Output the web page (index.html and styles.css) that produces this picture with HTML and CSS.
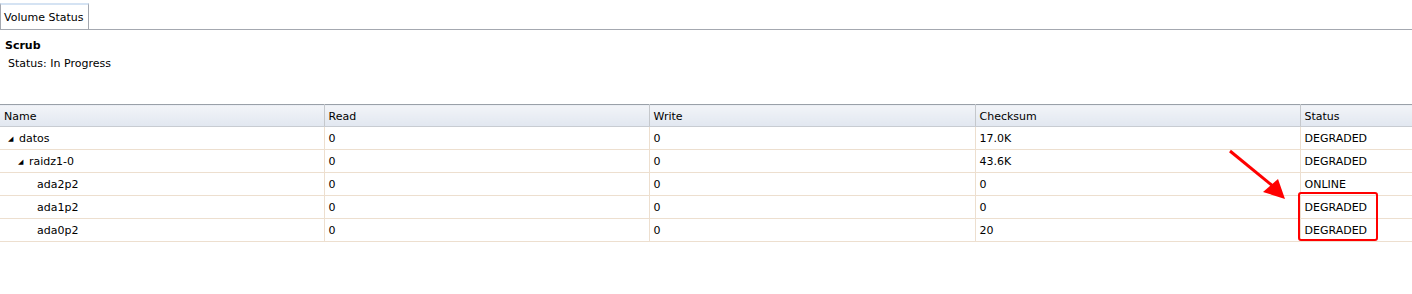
FILE: index.html
```html
<!DOCTYPE html>
<html lang="en">
<head>
  <meta charset="UTF-8" />
  <title>Volume Status</title>
  <link rel="stylesheet" href="styles.css">
</head>
<body>

  <div class="tabbar">
    <span class="tab">Volume Status</span>
  </div>

  <div class="scrub">
    <div class="scrub-title">Scrub</div>
    <div class="scrub-status">Status: In Progress</div>
  </div>

  <div class="grid-wrap">
    <table class="grid">
      <colgroup>
        <col style="width: 324px">
        <col style="width: 325px">
        <col style="width: 326px">
        <col style="width: 325px">
        <col>
      </colgroup>
      <thead>
        <tr>
          <th>Name</th>
          <th>Read</th>
          <th>Write</th>
          <th>Checksum</th>
          <th>Status</th>
        </tr>
      </thead>
      <tbody>
        <tr>
          <td class="lvl0"><span class="tri">&#9698;</span>datos</td>
          <td>0</td><td>0</td><td>17.0K</td><td>DEGRADED</td>
        </tr>
        <tr>
          <td class="lvl1"><span class="tri">&#9698;</span>raidz1-0</td>
          <td>0</td><td>0</td><td>43.6K</td><td>DEGRADED</td>
        </tr>
        <tr>
          <td class="lvl2">ada2p2</td>
          <td>0</td><td>0</td><td>0</td><td>ONLINE</td>
        </tr>
        <tr>
          <td class="lvl2">ada1p2</td>
          <td>0</td><td>0</td><td>0</td><td>DEGRADED</td>
        </tr>
        <tr>
          <td class="lvl2">ada0p2</td>
          <td>0</td><td>0</td><td>20</td><td>DEGRADED</td>
        </tr>
      </tbody>
    </table>

    <!-- annotation drawn over the grid -->
    <div class="mark-box"></div>
    <svg class="mark-arrow" width="80" height="60" viewBox="0 0 80 60">
      <line x1="2" y1="2" x2="46" y2="38" stroke="#ff0000" stroke-width="3" />
      <polygon points="57,50 35,43 50,30" fill="#ff0000" />
    </svg>
  </div>

</body>
</html>
```

FILE: styles.css
```css
body {
  margin: 0;
  padding: 0;
  font-family: "DejaVu Sans", Verdana, sans-serif;
  font-size: 11px;
  color: #000;
  background: #fff;
}

.tabbar {
  padding-top: 3px;
  border-bottom: 1px solid #a4a8b0;
  height: 26px;
  box-sizing: content-box;
}
.tab {
  display: inline-block;
  height: 26px;
  line-height: 26px;
  padding: 0 5px 0 3px;
  border: 1px solid #a4a8b0;
  border-top: 2px solid #d5e3f3;
  border-bottom: none;
  background: #fff;
  box-sizing: border-box;
  margin-bottom: -1px;
  position: relative;
}

.scrub { padding: 10px 5px 0; height: 64px; }
.scrub-title { font-weight: bold; line-height: 11px; }
.scrub-status { margin-top: 6px; padding-left: 3px; }

.grid-wrap { position: relative; }
.grid {
  width: 1412px;
  table-layout: fixed;
  border-collapse: collapse;
}
.grid th {
  height: 22px;
  padding: 2px 4px 0;
  font-weight: normal;
  text-align: left;
  background: linear-gradient(#f2f4f8, #e1e7f0);
  border-top: 1px solid #9aa0a8;
  border-bottom: 1px solid #c8ccd2;
  border-right: 1px solid #c5c8cc;
  box-sizing: border-box;
}
.grid th:last-child { border-right: none; }
.grid td {
  height: 22px;
  padding: 0 4px;
  border-bottom: 1px solid #eddfcf;
  border-right: 1px solid #eddfcf;
  white-space: nowrap;
  overflow: hidden;
}
.grid td:last-child { border-right: none; }

.tri { font-size: 7px; display: inline-block; width: 11px; vertical-align: 1px; }
.lvl0 { padding-left: 8px !important; }
.lvl1 { padding-left: 18px !important; }
.lvl2 { padding-left: 37px !important; }

.mark-box {
  position: absolute;
  left: 1298px;
  top: 88px;
  width: 76px;
  height: 45px;
  border: 2px solid #ff0000;
  border-radius: 3px;
}
.mark-arrow {
  position: absolute;
  left: 1228px;
  top: 45px;
}
```
